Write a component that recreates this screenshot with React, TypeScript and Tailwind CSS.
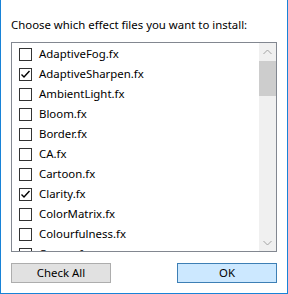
const items = [
  { name: "AdaptiveFog.fx", checked: false },
  { name: "AdaptiveSharpen.fx", checked: true },
  { name: "AmbientLight.fx", checked: false },
  { name: "Bloom.fx", checked: false },
  { name: "Border.fx", checked: false },
  { name: "CA.fx", checked: false },
  { name: "Cartoon.fx", checked: false },
  { name: "Clarity.fx", checked: true },
  { name: "ColorMatrix.fx", checked: false },
  { name: "Colourfulness.fx", checked: false },
  { name: "Curves.fx", checked: false },
];

function Check({ checked }: { checked: boolean }) {
  return (
    <div className="flex h-[13px] w-[13px] shrink-0 items-center justify-center border border-[#333333] bg-white">
      {checked && (
        <svg width="11" height="11" viewBox="0 0 11 11">
          <path d="M1.5 5.5 L4 8 L9.5 2" fill="none" stroke="#000" strokeWidth="1.4" />
        </svg>
      )}
    </div>
  );
}

function Chevron({ up }: { up: boolean }) {
  return (
    <svg width="9" height="6" viewBox="0 0 9 6">
      <path
        d={up ? "M0.5 5 L4.5 1 L8.5 5" : "M0.5 1 L4.5 5 L8.5 1"}
        fill="none"
        stroke="#a3a3a3"
        strokeWidth="1"
      />
    </svg>
  );
}

export default function App() {
  return (
    <div className="flex h-[294px] w-[288px] flex-col border-x border-b border-[#1883d7] bg-white pl-[10px] font-['Noto_Sans',sans-serif] text-[11.4px] text-black">
      <p className="mt-[17px] h-[16px] leading-[16px]">Choose which effect files you want to install:</p>
      <div className="mt-[9px] flex h-[210px] w-[266px] overflow-hidden border border-[#828790]">
        <div className="flex-1 overflow-hidden pt-[1px]">
          {items.map((it) => (
            <div key={it.name} className="flex h-[20px] items-center gap-[7px] pl-[7px]">
              <Check checked={it.checked} />
              <span className="leading-[16px]">{it.name}</span>
            </div>
          ))}
        </div>
        <div className="flex w-[17px] flex-col bg-[#f0f0f0]">
          <div className="flex h-[18px] items-center justify-center">
            <Chevron up />
          </div>
          <div className="h-[35px] bg-[#cdcdcd]" />
          <div className="flex-1" />
          <div className="flex h-[17px] items-center justify-center">
            <Chevron up={false} />
          </div>
        </div>
      </div>
      <div className="mt-[11px] flex w-[266px] justify-between">
        <button className="h-[20px] w-[100px] border border-[#adadad] bg-[#e1e1e1] leading-[16px]">
          Check All
        </button>
        <button className="h-[20px] w-[100px] border border-[#3d7fb5] bg-[#cce8ff] leading-[16px]">
          OK
        </button>
      </div>
    </div>
  );
}
